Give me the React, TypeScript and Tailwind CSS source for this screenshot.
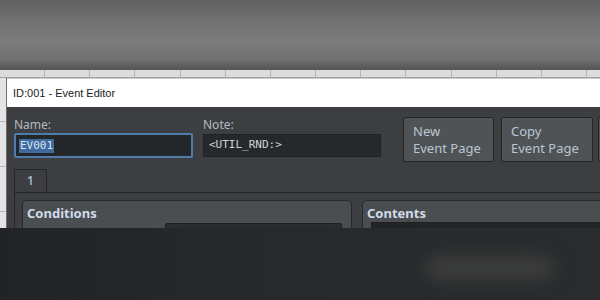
import React from "react";

const sans = "font-['Noto_Sans','Open_Sans',sans-serif]";
const mono = "font-['DejaVu_Sans_Mono','Liberation_Mono',monospace]";

export default function App() {
  const cells = Array.from({ length: 14 }, (_, i) => i);

  return (
    <div className="flex h-[300px] w-[600px] flex-col overflow-hidden bg-[#3c3e41]">
      {/* blurred editor background above the dialog */}
      <div className="h-[70px] shrink-0 bg-[linear-gradient(to_bottom,#616161_0%,#747474_35%,#7b7b7b_60%,#707070_85%,#545454_100%)]" />

      {/* tile grid strip */}
      <div className="flex h-[8px] shrink-0 border-b border-[#a4a4a4] bg-[#dddddd]">
        {cells.map((i) => (
          <div key={i} className="h-full w-[45.17px] shrink-0 border-r border-[#b4b4b4] bg-[#dcdcdc]" />
        ))}
      </div>

      <div className="flex h-[150px] shrink-0">
        {/* tile grid at the left edge */}
        <div className="flex w-[6px] shrink-0 flex-col bg-[#e4e4e4]">
          <div className="h-[44px] border-b border-[#b8b8b8]" />
          <div className="h-[45px] border-b border-[#b8b8b8]" />
          <div className="h-[45px] border-b border-[#b8b8b8]" />
        </div>

        <div className="flex min-w-0 flex-1 flex-col border-l border-[#6d6d6d]">
          <div className="flex h-[29px] shrink-0 items-center border-t border-[#c8c8c8] bg-white pl-[6px]">
            <span className="font-['Liberation_Sans',Arial,sans-serif] text-[11px] text-[#1b1b1b]">
              ID:001 - Event Editor
            </span>
          </div>

          <EditorBody />
        </div>
      </div>

      {/* dark blurred foreground */}
      <div className="flex h-[72px] shrink-0 items-center bg-[linear-gradient(to_right,#212325_0%,#27292b_45%,#292b2d_100%)]">
        <div className="ml-[425px] mt-[8px] h-[26px] w-[130px] rounded-full bg-[#3b3c3c] blur-[8px]" />
      </div>
    </div>
  );
}

function EditorBody() {
  return (
    <div className={`h-[121px] overflow-hidden bg-[#3c3e41] pl-[7px] pt-[10px] ${sans}`}>
      <div className="flex items-start">
        <div className="w-[179px] shrink-0">
          <div className="h-[16px] text-[12px] leading-[16px] text-[#b3bac2]">Name:</div>
          <div className="flex h-[25px] items-center rounded-[2px] border-2 border-[#4f7cab] bg-[#24272a] pl-[3px]">
            <span className={`bg-[#3f6b9f] px-[1px] text-[11px] leading-[14px] text-[#d6e4f4] ${mono}`}>EV001</span>
          </div>
        </div>

        <div className="ml-[10px] w-[178px] shrink-0">
          <div className="h-[16px] text-[12px] leading-[16px] text-[#b3bac2]">Note:</div>
          <div className="mt-[1px] flex h-[23px] items-center border border-[#1f2124] bg-[#26292c] pl-[5px]">
            <span className={`text-[11px] text-[#cfd3d7] ${mono}`}>&lt;UTIL_RND:&gt;</span>
          </div>
        </div>

        <div className="ml-[22px] flex shrink-0 gap-[7px]">
          <PageButton top="New" width="w-[91px]" />
          <PageButton top="Copy" width="w-[92px]" />
          <div className="ml-[-2px] h-[45px] w-[40px] shrink-0 rounded-[2px] border border-[#232527] bg-[#505356]" />
        </div>
      </div>

      {/* page tab */}
      <div className="mt-[7px] flex h-[23px] w-[33px] items-center justify-center rounded-t-[2px] border border-b-0 border-[#232527] bg-[#3c3e41]">
        <span className="text-[13px] font-medium text-[#a9c1da]">1</span>
      </div>
      <div className="flex gap-[10px] border-l border-t border-[#232527] pl-[7px] pt-[7px]">
        <Panel title="Conditions" width="w-[330px]">
          <div className="ml-[138px] mt-[1px] h-[10px] w-[177px] rounded-t-[2px] border border-[#1e2022] bg-[#2a2d30]" />
        </Panel>
        <Panel title="Contents" width="w-[260px]">
          <div className="ml-[4px] h-[10px] w-[260px] border border-[#1e2022] bg-[#222527]" />
        </Panel>
      </div>
    </div>
  );
}

function PageButton({ top, width }: { top: string; width: string }) {
  return (
    <div className={`h-[45px] ${width} shrink-0 rounded-[2px] border border-[#222426] bg-[#505356] pl-[9px] pt-[5px] text-[13px] leading-[17px] text-[#b9c6d3]`}>
      <div>{top}</div>
      <div>Event Page</div>
    </div>
  );
}

function Panel({ title, width, children }: { title: string; width: string; children: React.ReactNode }) {
  return (
    <div className={`${width} h-[40px] shrink-0 rounded-t-[5px] border border-[#27292b] bg-[#4b4e51] pl-[4px] pt-[3px]`}>
      <div className="text-[13px] font-bold leading-[18px] text-[#cfdbe8]">{title}</div>
      {children}
    </div>
  );
}
